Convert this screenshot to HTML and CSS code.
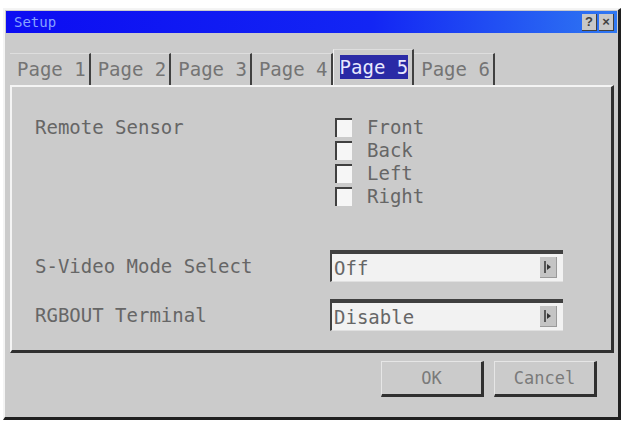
FILE: index.html
```html
<!DOCTYPE html>
<html lang="en">
<head>
    <meta charset="UTF-8">
    <title>Setup</title>
    <link rel="stylesheet" href="styles.css">
</head>
<body>
    <div class="window">
        <div class="titlebar">
            <span class="title">Setup</span>
            <div class="title-buttons">
                <span class="tb-btn">?</span>
                <span class="tb-btn">×</span>
            </div>
        </div>

        <div class="tabs">
            <div class="tab">Page 1</div>
            <div class="tab">Page 2</div>
            <div class="tab">Page 3</div>
            <div class="tab">Page 4</div>
            <div class="tab active"><span class="sel">Page 5</span></div>
            <div class="tab">Page 6</div>
        </div>

        <div class="panel">
            <div class="row sensor-row">
                <div class="label">Remote Sensor</div>
                <div class="checks">
                    <div class="check"><span class="box"></span>Front</div>
                    <div class="check"><span class="box"></span>Back</div>
                    <div class="check"><span class="box"></span>Left</div>
                    <div class="check"><span class="box"></span>Right</div>
                </div>
            </div>
            <div class="row select-row first">
                <div class="label">S-Video Mode Select</div>
                <div class="select">
                    <span class="value">Off</span>
                    <span class="arrow">
                        <svg width="10" height="14" viewBox="0 0 10 14"><path d="M2 1v12" stroke="#333" stroke-width="1.5"/><path d="M4 4l4 3-4 3z" fill="#333"/></svg>
                    </span>
                </div>
            </div>
            <div class="row select-row">
                <div class="label">RGBOUT Terminal</div>
                <div class="select">
                    <span class="value">Disable</span>
                    <span class="arrow">
                        <svg width="10" height="14" viewBox="0 0 10 14"><path d="M2 1v12" stroke="#333" stroke-width="1.5"/><path d="M4 4l4 3-4 3z" fill="#333"/></svg>
                    </span>
                </div>
            </div>
        </div>

        <div class="buttons">
            <button class="btn">OK</button>
            <button class="btn">Cancel</button>
        </div>
    </div>
</body>
</html>
```

FILE: styles.css
```css
body {
    margin: 0;
    background: #ffffff;
    font-family: "DejaVu Sans Mono", "Liberation Mono", monospace;
}
.window {
    margin: 8px 0 0 3px;
    width: 618px;
    height: 412px;
    box-sizing: border-box;
    background: #cbcbcb;
    border-left: 2px solid #f4f4f4;
    border-top: 2px solid #f4f4f4;
    border-right: 3px solid #202020;
    border-bottom: 3px solid #202020;
}
.titlebar {
    margin: 1px 1px 0 1px;
    height: 22px;
    background: linear-gradient(to right, #0c0cf2 0%, #1326f4 60%, #2f78f2 100%);
    display: flex;
    align-items: center;
    justify-content: space-between;
    padding: 0 3px 0 8px;
}
.title {
    color: #86a2ff;
    font-size: 14px;
}
.title-buttons {
    display: flex;
    gap: 2px;
}
.tb-btn {
    width: 14px;
    height: 16px;
    background: #c8c8c8;
    border-right: 1px solid #404040;
    border-bottom: 1px solid #404040;
    color: #404040;
    font-family: "Liberation Sans", Arial, sans-serif;
    font-size: 13px;
    font-weight: bold;
    line-height: 16px;
    text-align: center;
}
.tabs {
    display: flex;
    align-items: flex-end;
    margin: 16px 0 0 5px;
    height: 36px;
}
.tab {
    height: 32px;
    box-sizing: border-box;
    padding: 0 3px 0 7px;
    border-top: 1px solid #dedede;
    border-right: 2px solid #404040;
    color: #747474;
    font-size: 19px;
    line-height: 31px;
    white-space: nowrap;
}
.tab.active {
    height: 36px;
    border-left: 1px solid #f0f0f0;
    padding: 0 4px 0 6px;
    line-height: 35px;
}
.sel {
    background: #2a2aa6;
    color: #e8e8ff;
    padding: 1px 0;
}
.panel {
    margin-left: 5px;
    width: 604px;
    height: 268px;
    box-sizing: border-box;
    border-left: 2px solid #f4f4f4;
    border-top: 2px solid #f4f4f4;
    border-right: 3px solid #303030;
    border-bottom: 3px solid #303030;
    padding: 29px 0 0 23px;
}
.row {
    display: flex;
    color: #666666;
    font-size: 19px;
}
.label {
    width: 295px;
    flex: none;
    line-height: 23px;
}
.checks {
    margin-left: 5px;
}
.check {
    display: flex;
    align-items: center;
    height: 23px;
    line-height: 23px;
}
.box {
    width: 15px;
    height: 17px;
    background: #f6f6f6;
    border-top: 2px solid #404040;
    border-left: 2px solid #404040;
    margin-right: 15px;
}
.select-row {
    align-items: center;
    margin-top: 17px;
}
.select-row.first {
    margin-top: 42px;
}
.select {
    width: 233px;
    height: 32px;
    box-sizing: border-box;
    background: #f2f2f2;
    border-top: 4px solid #404040;
    border-left: 2px solid #404040;
    border-bottom: 1px solid #e0e0e0;
    display: flex;
    align-items: center;
    justify-content: space-between;
    padding: 0 6px 0 2px;
}
.value {
    line-height: 24px;
}
.arrow {
    width: 16px;
    height: 20px;
    background: #c4c4c4;
    border-right: 1px solid #9a9a9a;
    border-bottom: 1px solid #9a9a9a;
    display: flex;
    align-items: center;
    justify-content: center;
}
.buttons {
    display: flex;
    justify-content: flex-end;
    gap: 10px;
    margin: 8px 21px 0 0;
}
.btn {
    width: 103px;
    height: 36px;
    box-sizing: border-box;
    background: #cbcbcb;
    border: none;
    border-top: 1px solid #e6e6e6;
    border-left: 1px solid #e6e6e6;
    border-right: 3px solid #303030;
    border-bottom: 3px solid #303030;
    color: #7a7a7a;
    font-family: "DejaVu Sans Mono", "Liberation Mono", monospace;
    font-size: 17px;
    padding: 0;
}
```
